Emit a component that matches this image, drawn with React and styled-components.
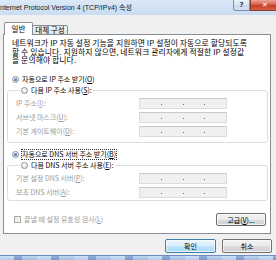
import React from "react";
import styled, { createGlobalStyle } from "styled-components";

const GlobalStyle = createGlobalStyle`
  html, body {
    margin: 0;
    padding: 0;
    background: #f0f0f0;
  }
  body {
    font-family: "Noto Sans CJK KR", "Noto Sans", sans-serif;
    color: #000;
  }
`;

const Window = styled.div`
  width: 276px;
  height: 260px;
  overflow: hidden;
  display: flex;
  flex-direction: column;
  background: #f0f0f0;
`;

const TitleBar = styled.div`
  height: 15px;
  flex: none;
  display: flex;
  align-items: flex-start;
  background: linear-gradient(to bottom, #dbe8f7, #c9dcf1);
`;

const Title = styled.div`
  font-family: "Liberation Sans", "Noto Sans CJK KR", sans-serif;
  font-size: 7px;
  line-height: 15px;
  color: #1b1b1b;
  white-space: nowrap;
`;

const Caption = styled.div`
  margin-left: auto;
  display: flex;
  margin-right: -4px;
`;

const CaptionButton = styled.div`
  width: ${(p) => p.$w}px;
  height: 11px;
  display: flex;
  align-items: center;
  justify-content: center;
  border: 1px solid ${(p) => (p.$close ? "#8b3a2c" : "#7d8fa8")};
  border-top: none;
  border-radius: ${(p) => (p.$close ? "0 0 3px 0" : "0 0 0 3px")};
  background: ${(p) =>
    p.$close
      ? "linear-gradient(to bottom, #e9a899, #d5583f 50%, #c53a20 51%, #d3664a)"
      : "linear-gradient(to bottom, #eef3fa, #d9e4f1 50%, #c9d7ea 51%, #d6e3f3)"};
  color: ${(p) => (p.$close ? "#fff" : "#2d3e57")};
  font-family: "DejaVu Sans", sans-serif;
  font-size: 7px;
  font-weight: bold;
  line-height: 1;
  box-sizing: border-box;
`;

const Client = styled.div`
  flex: 1;
  display: flex;
  flex-direction: column;
  padding: 7px 5px 0 3px;
  min-height: 0;
`;

const TabStrip = styled.div`
  display: flex;
  align-items: flex-end;
  padding-left: 1px;
  height: 13px;
  margin-bottom: -1px;
  position: relative;
  z-index: 1;
`;

const Tab = styled.div`
  box-sizing: border-box;
  height: ${(p) => (p.$active ? 13 : 10)}px;
  width: ${(p) => p.$w}px;
  border: 1px solid #898c95;
  border-bottom: ${(p) => (p.$active ? "none" : "1px solid #898c95")};
  border-radius: 2px 2px 0 0;
  margin-left: ${(p) => (p.$active ? 0 : -1)}px;
  background: ${(p) =>
    p.$active ? "#fff" : "linear-gradient(to bottom, #f3f3f3, #e4e4e4)"};
  font-size: 7.5px;
  line-height: ${(p) => (p.$active ? 12 : 8)}px;
  text-align: center;
  white-space: nowrap;
`;

const Panel = styled.div`
  box-sizing: border-box;
  height: 200px;
  border: 1px solid #898c95;
  background: #fff;
  padding: 4px 2px 0 3px;
  display: flex;
  flex-direction: column;
`;

const Intro = styled.p`
  margin: 0 0 0 5px;
  font-size: 7.8px;
  line-height: 8.7px;
  letter-spacing: 0.1px;
  white-space: nowrap;
`;

const OptionRow = styled.div`
  display: flex;
  align-items: center;
  height: 10px;
  margin: ${(p) => p.$top || 0}px 0 0 5px;
  font-size: 7px;
  white-space: nowrap;
`;

const Radio = styled.span`
  box-sizing: border-box;
  width: 7px;
  height: 7px;
  flex: none;
  border-radius: 50%;
  border: 1px solid #8e9096;
  background: radial-gradient(circle at 40% 35%, #ffffff, #d9dadc);
  display: flex;
  align-items: center;
  justify-content: center;
  margin-right: 3px;

  &::after {
    content: "";
    width: 3px;
    height: 3px;
    border-radius: 50%;
    background: ${(p) =>
      p.$checked ? "radial-gradient(circle at 40% 35%, #6aa8e8, #163f7a)" : "transparent"};
  }
`;

const Label = styled.span`
  color: ${(p) => (p.$disabled ? "#9b9b9b" : "#000")};
  outline: ${(p) => (p.$focus ? "1px dotted #333" : "none")};
  outline-offset: 0;
  line-height: 9px;
`;

const Group = styled.fieldset`
  margin: 0;
  padding: 1px 0 ${(p) => p.$pb}px 8px;
  border: 1px solid #dadfe3;
  border-radius: 3px;
  min-width: 0;
`;

const Legend = styled.legend`
  padding: 0 1px;
  margin-left: 4px;
  height: 11px;
  display: flex;
  align-items: center;
  font-size: 7px;
  white-space: nowrap;
`;

const FieldGrid = styled.div`
  display: grid;
  grid-template-columns: 123px 88px;
  grid-auto-rows: 14px;
  align-items: center;
  font-size: 7px;
`;

const AddressBox = styled.div`
  box-sizing: border-box;
  height: 11px;
  border: 1px solid #dcdcdc;
  border-top-color: #c9c9c9;
  background: #f0f0f0;
  display: flex;
  align-items: center;
`;

const Segment = styled.span`
  flex: 1;
`;

const Dot = styled.span`
  width: 1px;
  height: 1px;
  margin-top: 2px;
  background: #6f6f6f;
`;

const FooterRow = styled.div`
  display: flex;
  align-items: center;
  justify-content: space-between;
  margin: 12px 2px 0 7px;
  height: 14px;
`;

const CheckWrap = styled.div`
  display: flex;
  align-items: center;
  font-size: 7px;
  white-space: nowrap;
`;

const Check = styled.span`
  box-sizing: border-box;
  width: 7px;
  height: 7px;
  border: 1px solid #a9a9a9;
  background: linear-gradient(135deg, #e4e4e4, #fbfbfb);
  margin-right: 3px;
`;

const Button = styled.div`
  box-sizing: border-box;
  width: ${(p) => p.$w}px;
  height: ${(p) => p.$h || 14}px;
  border: 1px solid ${(p) => (p.$default ? "#3c7fb1" : "#707070")};
  border-radius: 2px;
  background: ${(p) =>
    p.$default
      ? "linear-gradient(to bottom, #eaf6fd, #d9f0fc 50%, #bee6fd 51%, #a7d9f5)"
      : "linear-gradient(to bottom, #f2f2f2, #ebebeb 50%, #dddddd 51%, #cfcfcf)"};
  box-shadow: inset 0 0 0 1px rgba(255, 255, 255, 0.7);
  display: flex;
  align-items: center;
  justify-content: center;
  font-size: 7px;
  white-space: nowrap;
`;

const ButtonBar = styled.div`
  display: flex;
  justify-content: flex-end;
  gap: 6px;
  margin-top: 5px;
  margin-right: -1px;
`;

const Taskbar = styled.div`
  height: 4px;
  flex: none;
  border-top: 1px solid #6d8fc0;
  background: repeating-linear-gradient(
      to right,
      rgba(255, 255, 255, 0.35) 0 14px,
      rgba(40, 80, 150, 0.25) 14px 22px,
      rgba(255, 255, 255, 0.15) 22px 37px
    ),
    linear-gradient(to bottom, #b7cfee, #8eb0dc);
`;

const AddressField = () => (
  <AddressBox>
    <Segment />
    <Dot />
    <Segment />
    <Dot />
    <Segment />
    <Dot />
    <Segment />
  </AddressBox>
);

const ipRows = [
  ["IP 주소(", "I", "):"],
  ["서브넷 마스크(", "U", "):"],
  ["기본 게이트웨이(", "D", "):"],
];

const dnsRows = [
  ["기본 설정 DNS 서버(", "P", "):"],
  ["보조 DNS 서버(", "A", "):"],
];

const Fields = ({ rows }) => (
  <FieldGrid>
    {rows.map(([a, k, b]) => (
      <React.Fragment key={a}>
        <Label $disabled>
          {a}
          <u>{k}</u>
          {b}
        </Label>
        <AddressField />
      </React.Fragment>
    ))}
  </FieldGrid>
);

export default function App() {
  return (
    <>
      <GlobalStyle />
      <Window>
        <TitleBar>
          <Title>nternet Protocol Version 4 (TCP/IPv4) 속성</Title>
          <Caption>
            <CaptionButton $w={17}>?</CaptionButton>
            <CaptionButton $w={30} $close>
              ✕
            </CaptionButton>
          </Caption>
        </TitleBar>
        <Client>
          <TabStrip>
            <Tab $active $w={29}>
              일반
            </Tab>
            <Tab $w={36}>대체 구성</Tab>
          </TabStrip>
          <Panel>
            <Intro>
              네트워크가 IP 자동 설정 기능을 지원하면 IP 설정이 자동으로 할당되도록
              <br />
              할 수 있습니다. 지원하지 않으면, 네트워크 관리자에게 적절한 IP 설정값
              <br />을 문의해야 합니다.
            </Intro>
            <OptionRow $top={9.5}>
              <Radio $checked />
              <Label>
                자동으로 IP 주소 받기(<u>O</u>)
              </Label>
            </OptionRow>
            <Group $pb={3}>
              <Legend>
                <Radio />
                <Label>
                  다음 IP 주소 사용(<u>S</u>):
                </Label>
              </Legend>
              <Fields rows={ipRows} />
            </Group>
            <OptionRow $top={7}>
              <Radio $checked />
              <Label $focus>
                자동으로 DNS 서버 주소 받기(<u>B</u>)
              </Label>
            </OptionRow>
            <Group $pb={0}>
              <Legend>
                <Radio />
                <Label>
                  다음 DNS 서버 주소 사용(<u>E</u>):
                </Label>
              </Legend>
              <Fields rows={dnsRows} />
            </Group>
            <FooterRow>
              <CheckWrap>
                <Check />
                <Label $disabled>
                  끝낼 때 설정 유효성 검사(<u>L</u>)
                </Label>
              </CheckWrap>
              <Button $w={50} $h={13}>
                고급(<u>V</u>)...
              </Button>
            </FooterRow>
          </Panel>
          <ButtonBar>
            <Button $w={51} $default>
              확인
            </Button>
            <Button $w={50}>취소</Button>
          </ButtonBar>
        </Client>
        <Taskbar />
      </Window>
    </>
  );
}
